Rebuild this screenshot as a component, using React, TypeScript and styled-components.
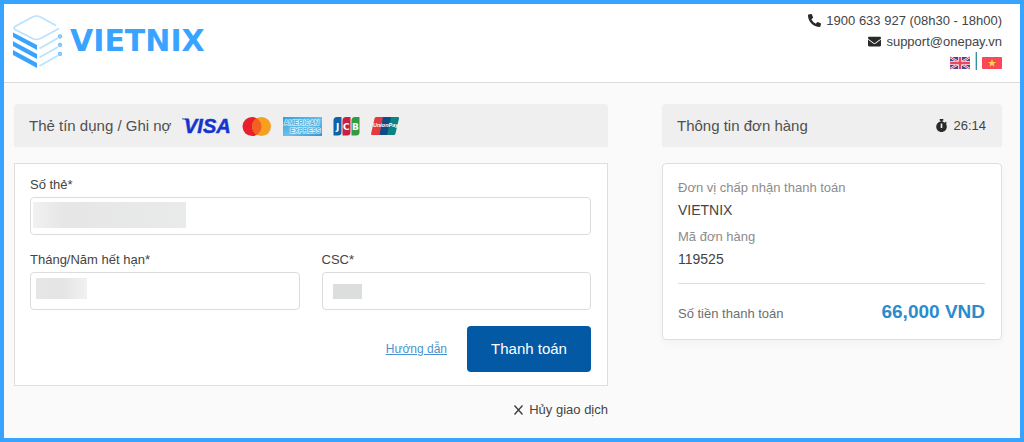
import React from "react";
import styled, { createGlobalStyle } from "styled-components";
import { FaEnvelope, FaPhoneAlt, FaStopwatch } from "react-icons/fa";

const GlobalStyle = createGlobalStyle`
  *, *::before, *::after { box-sizing: border-box; }
  body {
    margin: 0;
    font-family: "Liberation Sans", Arial, sans-serif;
    font-size: 13px;
    line-height: 20px;
    color: #444;
  }
  svg { display: block; flex: none; overflow: visible; }
`;

const Page = styled.div`
  min-height: 100vh;
  border: 4px solid #38a4ff;
  background: #fafafa;
`;

const Header = styled.header`
  display: flex;
  justify-content: space-between;
  align-items: flex-start;
  padding: 6px 18px 9px 9px;
  background: #fff;
  border-bottom: 1px solid #dcdcdc;
`;

const Brand = styled.a`
  display: flex;
  align-items: center;
  gap: 7px;
  padding-top: 4px;
  color: #38a4ff;
  font-family: "DejaVu Sans", sans-serif;
  font-size: 30px;
  line-height: 54px;
  font-weight: bold;
  text-decoration: none;
`;

const Contact = styled.address`
  display: flex;
  flex-direction: column;
  align-items: flex-end;
  font-style: normal;
`;

const ContactLine = styled.div`
  display: flex;
  align-items: center;
  gap: 5px;
  height: 21px;
`;

const FlagButton = styled.button`
  padding: 0;
  border: 0;
  background: none;
  cursor: pointer;
`;

const Divider = styled.span`
  width: 2px;
  height: 18px;
  align-self: flex-start;
  border-left: 1px solid #d8cfa6;
  background: #3c8f98;
`;

const Main = styled.main`
  display: grid;
  grid-template-columns: 594fr 340fr;
  gap: 54px;
  align-items: start;
  padding: 21px 18px 18px 10px;
`;

const Column = styled.section`
  display: flex;
  flex-direction: column;
  gap: 16px;
`;

const PanelHead = styled.header`
  display: flex;
  align-items: center;
  justify-content: ${(p: { $spread?: boolean }) => (p.$spread ? "space-between" : "flex-start")};
  gap: 11px;
  height: 43px;
  padding: 0 16px 0 15px;
  border-radius: 4px 4px 0 0;
  background: #efefef;
`;

const PanelTitle = styled.h2`
  margin: 0;
  font-size: 15px;
  font-weight: normal;
  color: #4f4f4f;
`;

const Brands = styled.div`
  display: flex;
  align-items: center;
  gap: 11px;
`;

const Timer = styled.div`
  display: flex;
  align-items: center;
  gap: 5px;
`;

const CardForm = styled.form`
  display: grid;
  grid-template-columns: 1fr 1fr;
  gap: 15px 22px;
  padding: 11px 16px 13px 15px;
  border: 1px solid #dedede;
  background: #fff;
`;

const Field = styled.div`
  display: flex;
  flex-direction: column;
  gap: 2px;
  grid-column: ${(p: { $wide?: boolean }) => (p.$wide ? "1 / -1" : "auto")};
`;

const InputBox = styled.div`
  position: relative;
`;

const Input = styled.input`
  display: block;
  width: 100%;
  height: 38px;
  padding: 0 12px;
  border: 1px solid #dcdcdc;
  border-radius: 4px;
  background: #fff;
  font: inherit;
  color: inherit;
`;

const Mask = styled.span<{ $x: number; $y: number; $w: number; $h: number; $tone: string }>`
  position: absolute;
  left: ${(p) => p.$x}px;
  top: ${(p) => p.$y}px;
  width: ${(p) => p.$w}px;
  height: ${(p) => p.$h}px;
  background: ${(p) => p.$tone};
`;

const Actions = styled.div`
  grid-column: 1 / -1;
  display: flex;
  justify-content: flex-end;
  align-items: center;
  gap: 20px;
  padding-top: 1px;
`;

const GuideLink = styled.a`
  color: #4b93cf;
  font-size: 12px;
  text-decoration: underline;
`;

const PayButton = styled.button`
  width: 124px;
  height: 46px;
  border: 0;
  border-radius: 4px;
  background: #0459a5;
  color: #fff;
  font: inherit;
  font-size: 15px;
  cursor: pointer;
`;

const CancelButton = styled.button`
  display: flex;
  align-items: center;
  gap: 6px;
  align-self: flex-end;
  margin-top: -2px;
  padding: 0;
  border: 0;
  background: none;
  font: inherit;
  color: inherit;
  cursor: pointer;
`;

const OrderCard = styled.div`
  padding: 14px 16px 13px 15px;
  border: 1px solid #dedede;
  border-radius: 4px;
  background: #fff;
  box-shadow: 0 4px 8px rgba(0, 0, 0, 0.03);
`;

const Details = styled.dl`
  margin: 0;
  padding-bottom: 12px;
  border-bottom: 1px solid #dedede;
`;

const Term = styled.dt`
  line-height: 20px;
  color: #8c8c8c;
  dd + & { margin-top: 5px; }
`;

const Value = styled.dd`
  margin: 0;
  font-size: 14px;
  line-height: 24px;
`;

const Total = styled.div`
  display: flex;
  justify-content: space-between;
  align-items: baseline;
  padding-top: 16px;
  line-height: 24px;
  color: #6e6e6e;
`;

const Amount = styled.strong`
  font-size: 19px;
  font-weight: bold;
  color: #2a8ccc;
`;

const LogoMark = () => (
  <svg width="50" height="54" viewBox="0 0 50 54" fill="none" aria-hidden="true">
    <path d="M43 11.500 27.500 3Q23.500 1 19.500 3L2 12.500Q0 14 2 15.500L19.500 24.500Q23.500 26.500 27.500 24.500L46 14.500" stroke="#b9e2ff" strokeWidth="1.700" />
    <path d="M0 18.500 24 31V36L0 23ZM0 27.300 24 40V45L0 32ZM0 36 24 49V54L0 41Z" fill="#38a4ff" />
    <path d="M26.500 34.500 45 24M26.500 43.500 45 33M26.500 52 45 41.500" stroke="#b9e2ff" strokeWidth="1.700" />
    <g stroke="#6fbfff" strokeWidth="1.500" fill="#cdeaff">
      <circle cx="47" cy="22.500" r="1.400" />
      <circle cx="47" cy="31" r="1.400" />
      <circle cx="47" cy="40" r="1.400" />
    </g>
  </svg>
);

const FlagUK = () => (
  <svg width="20" height="12" viewBox="0 0 20 12" aria-hidden="true">
    <rect width="20" height="12" rx="1" fill="#3d4a9a" />
    <path d="M0 0 20 12M20 0 0 12" stroke="#f0e4f0" strokeWidth="2.200" />
    <path d="M0 0 20 12M20 0 0 12" stroke="#e0485a" strokeWidth="1" />
    <path d="M10 0V12M0 6H20" stroke="#f6e6ee" strokeWidth="4" />
    <path d="M10 0V12M0 6H20" stroke="#e8485c" strokeWidth="2.400" />
  </svg>
);

const FlagVN = () => (
  <svg width="20" height="12" viewBox="0 0 20 12" aria-hidden="true">
    <rect width="20" height="12" rx="1" fill="#fb4856" />
    <path d="m10 2 1.100 2.900h3l-2.400 1.900.9 2.900L10 8 7.400 9.700l.9-2.900-2.400-1.900h3z" fill="#ffd54a" />
  </svg>
);

const Visa = () => (
  <svg width="49" height="20" viewBox="0 0 49 20" role="img" aria-label="Visa">
    <text x="2" y="17" fontFamily="Liberation Sans, sans-serif" fontSize="20" fontWeight="bold" fontStyle="italic" fill="#1634cc" stroke="#1634cc" strokeWidth=".5">VISA</text>
    <path d="M0 2.500H6L8 7Q5 3.500 0 3.200Z" fill="#1634cc" />
  </svg>
);

const Mastercard = () => (
  <svg width="30" height="20" viewBox="0 0 30 20" role="img" aria-label="Mastercard">
    <circle cx="10" cy="10.500" r="9.500" fill="#e9202b" />
    <circle cx="19.500" cy="10.500" r="9.500" fill="#f79f1f" />
    <path d="M14.750 2.300a9.500 9.500 0 0 1 0 16.400a9.500 9.500 0 0 1 0-16.400z" fill="#f26122" />
  </svg>
);

const Amex = () => (
  <svg width="39" height="20" viewBox="0 0 39 20" role="img" aria-label="American Express">
    <defs>
      <linearGradient id="amex" x1="0" y1="0" x2="1" y2="1">
        <stop offset="0" stopColor="#2aa3de" />
        <stop offset=".55" stopColor="#6cc0ea" />
        <stop offset="1" stopColor="#2b97d6" />
      </linearGradient>
    </defs>
    <rect y="1" width="39" height="19" fill="url(#amex)" />
    <g fontFamily="Liberation Sans, sans-serif" fontSize="6.500" fontWeight="bold" fill="#4fb0e2" stroke="#e6f5fd" strokeWidth="1.200" paintOrder="stroke">
      <text x="1" y="8.500">AMERICAN</text>
      <text x="7" y="17">EXPRESS</text>
    </g>
  </svg>
);

const Jcb = () => (
  <svg width="27" height="20" viewBox="0 0 27 20" role="img" aria-label="JCB">
    <path d="M4 1H8.500V16Q8.500 19.500 5 19.500H.5V4.500Q.5 1 4 1Z" fill="#0d62ab" />
    <path d="M13 1H17.500V16Q17.500 19.500 14 19.500H9.500V4.500Q9.500 1 13 1Z" fill="#c9203f" />
    <path d="M22 1H26.500V16Q26.500 19.500 23 19.500H18.500V4.500Q18.500 1 22 1Z" fill="#2f9c43" />
    <g fontFamily="DejaVu Sans, sans-serif" fontSize="9" fontWeight="bold" fill="#fff">
      <text x="3" y="13.500">J</text>
      <text x="10" y="13.500">C</text>
      <text x="19" y="13.500">B</text>
    </g>
  </svg>
);

const UnionPay = () => (
  <svg width="29" height="20" viewBox="0 0 29 20" role="img" aria-label="UnionPay">
    <path d="M5 1H14L10 19H1Q0 19 0 18L3.500 2.500Q4 1 5 1Z" fill="#e23a40" />
    <path d="M12 1H21L17 19H8.500Z" fill="#0c4d87" />
    <path d="M20 1H27Q28.500 1 28 2.500L24.500 17.500Q24 19 23 19H16Z" fill="#0a8387" />
    <text x="2" y="11" fontFamily="Liberation Sans, sans-serif" fontSize="5.500" fontWeight="bold" fontStyle="italic" fill="#fff">UnionPay</text>
  </svg>
);

const Cross = () => (
  <svg width="9" height="10" viewBox="0 0 9 10" aria-hidden="true">
    <path d="M.5 .5 8.500 9.500M8.500 .5 .5 9.500" stroke="#3a3a3a" strokeWidth="1.300" />
  </svg>
);

export default function App() {
  return (
    <>
      <GlobalStyle />
      <Page>
        <Header>
          <Brand href="#">
            <LogoMark />
            VIETNIX
          </Brand>
          <Contact>
            <ContactLine>
              <FaPhoneAlt size={13} color="#2a2a2a" />
              1900 633 927 (08h30 - 18h00)
            </ContactLine>
            <ContactLine>
              <FaEnvelope size={13} color="#2a2a2a" />
              support@onepay.vn
            </ContactLine>
            <ContactLine>
              <FlagButton type="button" aria-label="English"><FlagUK /></FlagButton>
              <Divider />
              <FlagButton type="button" aria-label="Tiếng Việt"><FlagVN /></FlagButton>
            </ContactLine>
          </Contact>
        </Header>
        <Main>
          <Column>
            <PanelHead>
              <PanelTitle>Thẻ tín dụng / Ghi nợ</PanelTitle>
              <Brands>
                <Visa />
                <Mastercard />
                <Amex />
                <Jcb />
                <UnionPay />
              </Brands>
            </PanelHead>
            <CardForm id="card-form" onSubmit={(e) => e.preventDefault()}>
              <Field $wide>
                <label htmlFor="number">Số thẻ*</label>
                <InputBox>
                  <Input id="number" inputMode="numeric" />
                  <Mask $x={3} $y={5} $w={153} $h={26} $tone="linear-gradient(90deg, #f1f1f1, #e6e6e6 20%, #e9eaea)" />
                </InputBox>
              </Field>
              <Field>
                <label htmlFor="expiry">Tháng/Năm hết hạn*</label>
                <InputBox>
                  <Input id="expiry" />
                  <Mask $x={6} $y={6} $w={51} $h={21} $tone="linear-gradient(90deg, #e6e6e6, #e4e4e4 50%, #f1f1f1)" />
                </InputBox>
              </Field>
              <Field>
                <label htmlFor="csc">CSC*</label>
                <InputBox>
                  <Input id="csc" inputMode="numeric" />
                  <Mask $x={11} $y={12} $w={29} $h={15} $tone="#dcdedd" />
                </InputBox>
              </Field>
              <Actions>
                <GuideLink href="#">Hướng dẫn</GuideLink>
                <PayButton type="submit">Thanh toán</PayButton>
              </Actions>
            </CardForm>
            <CancelButton type="button">
              <Cross />
              Hủy giao dịch
            </CancelButton>
          </Column>
          <Column>
            <PanelHead $spread>
              <PanelTitle>Thông tin đơn hàng</PanelTitle>
              <Timer>
                <FaStopwatch size={13} color="#2a2a2a" />
                26:14
              </Timer>
            </PanelHead>
            <OrderCard>
              <Details>
                <Term>Đơn vị chấp nhận thanh toán</Term>
                <Value>VIETNIX</Value>
                <Term>Mã đơn hàng</Term>
                <Value>119525</Value>
              </Details>
              <Total>
                Số tiền thanh toán
                <Amount>66,000 VND</Amount>
              </Total>
            </OrderCard>
          </Column>
        </Main>
      </Page>
    </>
  );
}
